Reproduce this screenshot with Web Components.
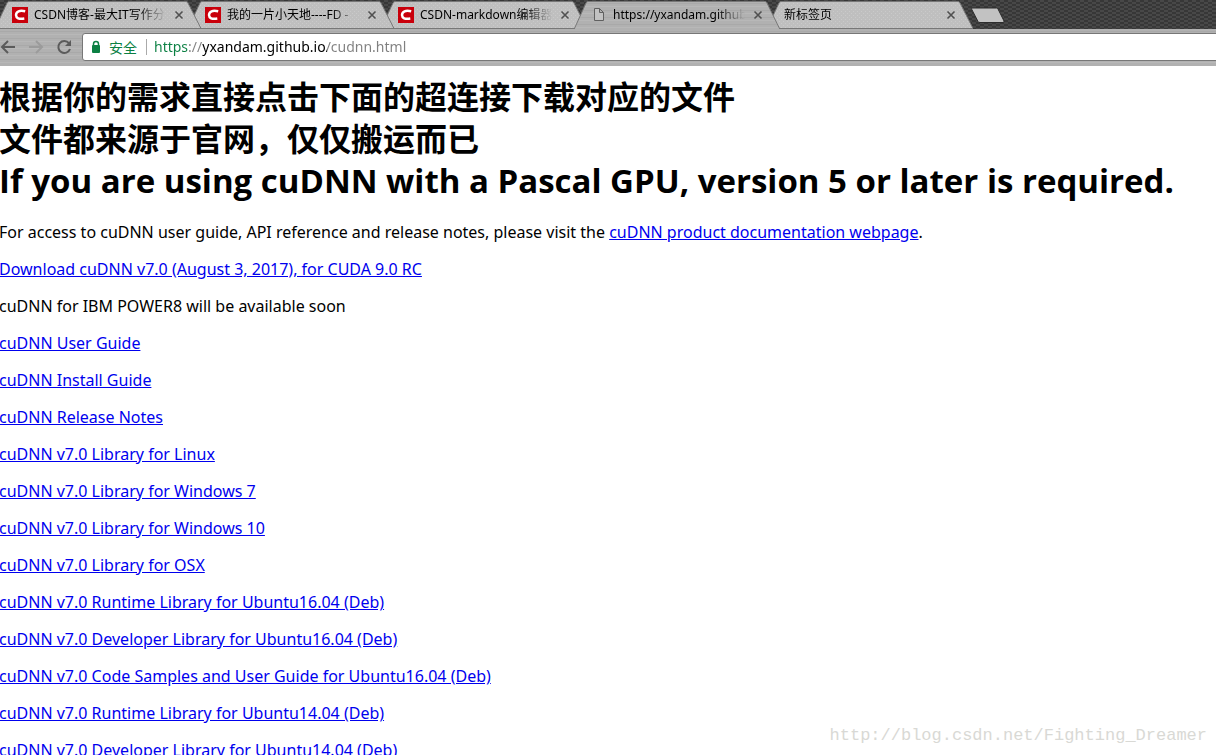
<!DOCTYPE html>
<html lang="zh-CN">
<head>
<meta charset="utf-8">
<title>cuDNN</title>
<style>
html, body { margin: 0; background: #fff; }
body { font-family: "Noto Sans", "Noto Sans CJK SC", sans-serif; overflow-x: hidden; }
</style>
</head>
<body>
<browser-window>
  <tab-strip slot="tabs">
    <browser-tab kind="csdn" style="z-index:5">CSDN博客-最大IT写作分享</browser-tab>
    <browser-tab kind="csdn" style="z-index:4">我的一片小天地----FD -</browser-tab>
    <browser-tab kind="csdn" style="z-index:3">CSDN-markdown编辑器</browser-tab>
    <browser-tab kind="page" active style="z-index:6">https://yxandam.github.io</browser-tab>
    <browser-tab style="z-index:1">新标签页</browser-tab>
  </tab-strip>
  <tool-bar slot="toolbar"></tool-bar>
  <cudnn-page></cudnn-page>
  <water-mark>http://blog.csdn.net/Fighting_Dreamer</water-mark>
</browser-window>
<script>
function define(name, html, setup) {
  const t = document.createElement('template');
  t.innerHTML = html;
  customElements.define(name, class extends HTMLElement {
    constructor() {
      super();
      this.attachShadow({ mode: 'open' }).append(t.content.cloneNode(true));
    }
    connectedCallback() { if (setup) setup(this, this.shadowRoot); }
  });
}

define('browser-window', `
<style>
:host { display: flex; flex-direction: column; position: relative; height: 100vh; overflow: hidden; }
</style>
<slot name="tabs"></slot><slot name="toolbar"></slot><slot></slot>`);

define('tab-strip', `
<style>
:host { display: flex; align-items: flex-end; height: 29px; flex: none; overflow: hidden;
  background: conic-gradient(#373737 25%, #484848 0 50%, #373737 0 75%, #484848 0) 0 0 / 8px 4px; }
.tabs { display: flex; margin-left: -5px; min-width: 0; isolation: isolate; }
.new { flex: none; align-self: flex-start; margin: 7px 0 0 -2px; padding: 0; border: 0; background: none; width: 34px; height: 17px; }
svg { display: block; }
</style>
<div class="tabs" role="tablist"><slot></slot></div>
<button class="new" aria-label="新标签页"><svg width="34" height="17" viewBox="0 0 34 17"><path d="M1.500 1h24q1 0 1.500 1l6 12q.5 1.500-1 1.500H9q-1.500 0-2-1L.8 2.500Q.300 1 1.500 1z" fill="#c2c2c2" stroke="#2c2c2c"/></svg></button>`);

define('browser-tab', `
<style>
:host { display: flex; align-items: center; position: relative; isolation: isolate; box-sizing: border-box; width: 206px; height: 28px; margin-right: -13px; padding: 0 14px 0 17px; gap: 5px; }
:host(:last-child) { margin-right: 0; }
.shape { position: absolute; inset: 0; width: 100%; height: 28px; z-index: -1; }
.tab { flex: 1; min-width: 0; display: flex; align-items: center; gap: 6px; padding: 0; border: 0; background: none; text-align: left;
  font: 12px/18px "Noto Sans", "Noto Sans CJK SC", sans-serif; color: #000; }
.icon { display: flex; flex: none; }
.title { flex: 1; white-space: nowrap; overflow: hidden; -webkit-mask-image: linear-gradient(to left, transparent, #000 28px); mask-image: linear-gradient(to left, transparent, #000 28px); }
.close { flex: none; width: 16px; height: 16px; padding: 0; border: 0; background: none; }
svg { display: block; }
</style>
<svg class="shape" viewBox="0 0 206 28" preserveAspectRatio="none">
  <defs>
    <pattern id="dots" width="4" height="4" patternUnits="userSpaceOnUse"><rect width="4" height="4" fill="#bfbfbf"/><rect width="1" height="1" fill="#cacaca"/><rect x="2" y="2" width="1" height="1" fill="#cacaca"/></pattern>
    <pattern id="brush" width="206" height="7" patternUnits="userSpaceOnUse"><rect width="206" height="7" fill="#b1b1b1"/><rect y="2" width="206" height="1" fill="#a9a9a9"/><rect y="5" width="206" height="1" fill="#b8b8b8"/></pattern>
  </defs>
  <path class="fill" d="M0 27.500L12 2Q12.500 .5 14 .5H191Q192.500 .5 193 2L206 27.500z" fill="url(#dots)" stroke="#777"/>
</svg>
<button class="tab" role="tab"><span class="icon"></span><span class="title"><slot></slot></span></button>
<button class="close" aria-label="关闭"><svg width="16" height="16"><path d="M4.500 4.500l7 7m0-7l-7 7" stroke="#505050" stroke-width="1.600"/></svg></button>`,
(host, root) => {
  const icons = {
    csdn: '<svg width="16" height="16"><path fill="#c9000b" d="M0 0h16v16H0z"/><path d="M13.200 4.300Q4.500 2.500 4 8q.1 4.800 8.300 3.600" fill="none" stroke="#fff" stroke-width="2.500"/></svg>',
    page: '<svg width="16" height="16"><path d="M3.500 1.500h5l4 4v8h-9zM8.500 1.500v4h4" fill="#c2c2c2" stroke="#606060"/></svg>'
  };
  const icon = root.querySelector('.icon'), kind = host.getAttribute('kind');
  if (kind) icon.innerHTML = icons[kind]; else icon.remove();
  if (host.hasAttribute('active')) {
    const fill = root.querySelector('.fill');
    fill.setAttribute('fill', 'url(#brush)');
    fill.setAttribute('d', 'M0 28.500L12 2Q12.500 .5 14 .5H191Q192.500 .5 193 2L206 28.500');
  }
  root.querySelector('.tab').setAttribute('aria-selected', host.hasAttribute('active'));
});

define('tool-bar', `
<style>
:host { display: flex; align-items: center; flex: none; box-sizing: border-box; height: 37px; padding: 4px 0 5px; overflow: hidden;
  background: repeating-linear-gradient(#b1b1b1 0 2px, #a9a9a9 2px 3px, #b1b1b1 3px 5px, #b8b8b8 5px 6px, #b1b1b1 6px 7px); }
.nav { display: flex; flex: none; gap: 12px; width: 82px; }
.nav button { width: 16px; height: 16px; padding: 0; border: 0; background: none; }
svg { display: block; flex: none; }
form { flex: 1; min-width: 0; display: flex; align-items: center; box-sizing: border-box; height: 28px; margin: 0 -4px 0 0; padding: 0 0 0 8px; border: 1px solid #777; border-radius: 3px; background: #fff; }
label { font: 14px/20px "Noto Sans CJK SC", sans-serif; color: #0b8043; margin-left: 8px; padding-right: 9px; flex: none; }
.sep { width: 1px; height: 16px; background: #aaa; flex: none; }
input { flex: 1; min-width: 0; height: 24px; margin: 0 0 0 7px; padding: 0; border: 0; outline: 0;
  font: 14px/24px "Noto Sans", sans-serif; -webkit-text-fill-color: transparent;
  background: linear-gradient(90deg, #0b8043 0 35px, #808080 35px 48px, #000 48px 173px, #808080 173px); -webkit-background-clip: text; background-clip: text; }
</style>
<div class="nav">
<button aria-label="后退"><svg width="16" height="16"><path d="M15 8H2M8 2L2 8l6 6" fill="none" stroke="#5b5b5b" stroke-width="2"/></svg></button>
<button aria-label="前进"><svg width="16" height="16"><path d="M1 8h13M8 2l6 6-6 6" fill="none" stroke="#9b9b9b" stroke-width="2"/></svg></button>
<button aria-label="重新加载"><svg width="16" height="16"><path d="M13 4.200A6 6 0 1 0 14 10" fill="none" stroke="#5b5b5b" stroke-width="2"/><path d="M15 1v6H9z" fill="#5b5b5b"/></svg></button>
</div>
<form><svg width="10" height="14"><path d="M2.500 6V4a2.500 2.500 0 0 1 5 0v2" fill="none" stroke="#0b8043" stroke-width="1.500"/><rect x="1" y="5" width="8" height="8" rx="1" fill="#0b8043"/></svg>
<label for="url">安全</label><span class="sep"></span><input id="url" value="https://yxandam.github.io/cudnn.html" spellcheck="false"></form>`);

define('cudnn-page', `
<style>
:host { display: block; flex: 1; min-height: 0; overflow: hidden; padding-top: 10px; background: #fff; color: #000; font: 16px/21px "Noto Sans", "Noto Sans CJK SC", sans-serif; }
h1 { margin: 0 0 20px -1px; font-size: 32px; line-height: 42px; font-weight: 700; white-space: nowrap; }
.latin { font-family: "Open Sans", sans-serif; font-size: 33px; }
p { margin: 0 0 16px -1px; white-space: nowrap; }
a { color: #00e; }
</style>
<h1>根据你的需求直接点击下面的超连接下载对应的文件<br>文件都来源于官网，仅仅搬运而已<br><span class="latin">If you are using cuDNN with a Pascal GPU, version 5 or later is required.</span></h1>
<p>For access to cuDNN user guide, API reference and release notes, please visit the <a href="#">cuDNN product documentation webpage</a>.</p>
<p><a href="#">Download cuDNN v7.0 (August 3, 2017), for CUDA 9.0 RC</a></p>
<p>cuDNN for IBM POWER8 will be available soon</p>
<p><a href="#">cuDNN User Guide</a></p>
<p><a href="#">cuDNN Install Guide</a></p>
<p><a href="#">cuDNN Release Notes</a></p>
<p><a href="#">cuDNN v7.0 Library for Linux</a></p>
<p><a href="#">cuDNN v7.0 Library for Windows 7</a></p>
<p><a href="#">cuDNN v7.0 Library for Windows 10</a></p>
<p><a href="#">cuDNN v7.0 Library for OSX</a></p>
<p><a href="#">cuDNN v7.0 Runtime Library for Ubuntu16.04 (Deb)</a></p>
<p><a href="#">cuDNN v7.0 Developer Library for Ubuntu16.04 (Deb)</a></p>
<p><a href="#">cuDNN v7.0 Code Samples and User Guide for Ubuntu16.04 (Deb)</a></p>
<p><a href="#">cuDNN v7.0 Runtime Library for Ubuntu14.04 (Deb)</a></p>
<p><a href="#">cuDNN v7.0 Developer Library for Ubuntu14.04 (Deb)</a></p>`);

define('water-mark', `
<style>
:host { position: absolute; right: 9px; bottom: 7px; font: 17px/24px "Liberation Mono", monospace; color: #d9d9d5; }
</style><slot></slot>`);
</script>
</body>
</html>
